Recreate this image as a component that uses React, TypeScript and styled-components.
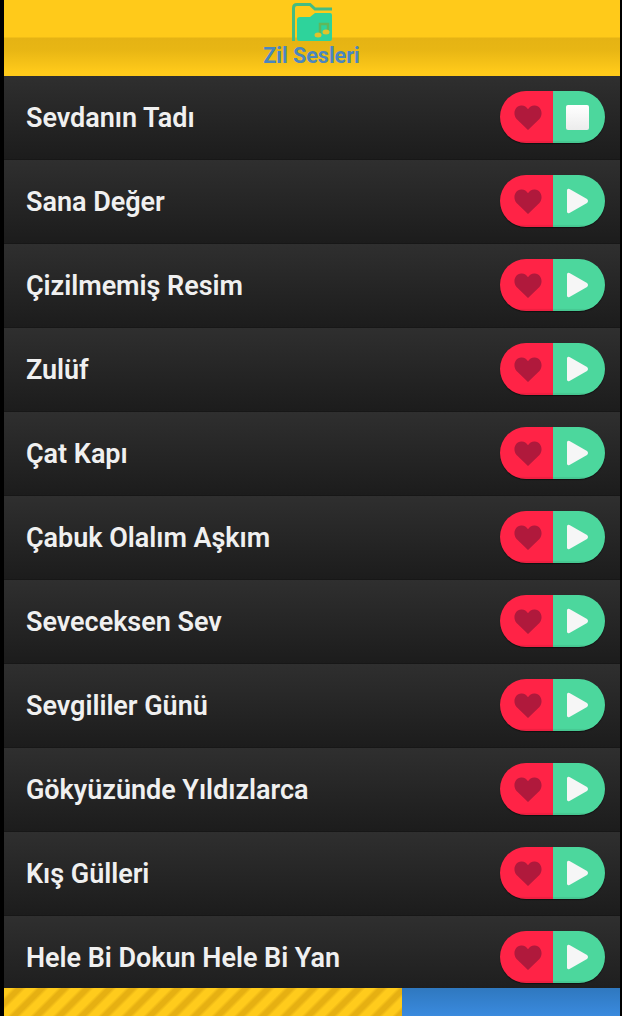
import React from 'react';
import styled, { createGlobalStyle } from 'styled-components';

const songs = [
  'Sevdanın Tadı',
  'Sana Değer',
  'Çizilmemiş Resim',
  'Zulüf',
  'Çat Kapı',
  'Çabuk Olalım Aşkım',
  'Seveceksen Sev',
  'Sevgililer Günü',
  'Gökyüzünde Yıldızlarca',
  'Kış Gülleri',
  'Hele Bi Dokun Hele Bi Yan',
];

const GlobalStyle = createGlobalStyle`
  html, body {
    margin: 0;
    padding: 0;
    background: #000;
    overflow: hidden;
  }
`;

const Screen = styled.div`
  width: 622px;
  height: 1016px;
  padding: 0 2px 0 4px;
  box-sizing: border-box;
  display: flex;
  flex-direction: column;
  overflow: hidden;
  font-family: Roboto, 'Liberation Sans', sans-serif;
`;

const Header = styled.header`
  height: 76px;
  flex: none;
  display: flex;
  flex-direction: column;
  align-items: center;
  background: linear-gradient(
    #ffca1a 0,
    #ffca1a 37px,
    #e5b314 38px,
    #e8b614 50px,
    #ffca1a 72px
  );
`;

const FolderIcon = styled.svg`
  width: 42px;
  height: 40px;
  margin-top: 2px;
  flex: none;
`;

const Title = styled.h1`
  margin: 1px 1px 0 0;
  font-size: 21.5px;
  line-height: 25px;
  font-weight: 700;
  color: #4a86c0;
`;

const List = styled.main`
  flex: 1;
  min-height: 0;
  overflow: hidden;
`;

const Row = styled.div`
  height: 84px;
  box-sizing: border-box;
  display: flex;
  align-items: center;
  justify-content: space-between;
  padding: 0 15px 0 22px;
  background: linear-gradient(#2f2f2f, #1c1c1c);
  border-bottom: 1px solid #171717;
`;

const SongName = styled.span`
  margin-top: 1px;
  font-size: 27px;
  font-weight: 600;
  letter-spacing: -0.03px;
  color: #f0f0f0;
`;

const Toggle = styled.div`
  width: 105px;
  height: 52px;
  display: flex;
  margin-top: -1px;
  border-radius: 26px;
  overflow: hidden;
  box-shadow: 0 1px 1px rgba(0, 0, 0, 0.5);
`;

const Half = styled.button<{ $color: string; $width: number }>`
  width: ${(p) => p.$width}px;
  padding: 0;
  border: 0;
  display: flex;
  align-items: center;
  justify-content: center;
  background: ${(p) => p.$color};
  box-shadow: inset 0 -2px 1px rgba(0, 0, 0, 0.07);
`;

const LikeHalf = styled(Half)`
  padding-left: 3px;
`;

const PlayHalf = styled(Half)`
  padding-right: 3px;
`;

const StopSquare = styled.span`
  width: 23px;
  height: 25px;
  border-radius: 2px;
  background: linear-gradient(#fff, #ececec);
`;

const BottomBar = styled.footer`
  height: 28px;
  flex: none;
  display: flex;
`;

const Progress = styled.div`
  width: 398px;
  background: repeating-linear-gradient(
    135deg,
    #ffcb1c 0,
    #ffcb1c 6px,
    #e6b012 9px,
    #e6b012 13px,
    #ffcb1c 16px
  );
`;

const Rest = styled.div`
  flex: 1;
  background: linear-gradient(#2f78bf, #3a8ade);
`;

const Heart = () => (
  <svg width="28" height="25" viewBox="0 0 27 24">
    <path
      d="M13.500 24 L2.500 13.500 C-1.500 9 0.500 1 7 0.500 C9.800 0.300 12 1.800 13.500 4 C15 1.800 17.200 0.300 20 0.500 C26.500 1 28.500 9 24.500 13.500 Z"
      fill="#b0193c"
    />
  </svg>
);

const PlayArrow = () => (
  <svg width="23" height="26" viewBox="0 0 23 26">
    <path
      d="M3.500 1 L21 11 Q23 13 21 15 L3.500 25 Q1 26 1 23.500 L1 2.500 Q1 0 3.500 1 Z"
      fill="#f6f6f6"
    />
  </svg>
);

export default function App() {
  return (
    <Screen>
      <GlobalStyle />
      <Header>
        <FolderIcon viewBox="0 0 42 40">
          <path
            d="M2.500 39 L2.500 6 Q2.500 2.500 6 2.500 L19 2.500 L24 7 L41 7"
            fill="none"
            stroke="#45bc82"
            strokeWidth="3"
          />
          <path
            d="M8 39 Q6 39 6 37 L6 18 Q6 15 9 15 L19 15 L24 11 L39 11 Q41 11 41 13 L41 37 Q41 39 39 39 Z"
            fill="#2ed39b"
          />
          <path d="M29 32 L29 22 L37 22 L37 29" fill="none" stroke="#5fb85a" strokeWidth="2.500" />
          <ellipse cx="27" cy="33" rx="3.500" ry="2.500" fill="#e3c22a" />
          <ellipse cx="35" cy="30" rx="3.500" ry="2.500" fill="#e3c22a" />
        </FolderIcon>
        <Title>Zil Sesleri</Title>
      </Header>
      <List>
        {songs.map((name, i) => (
          <Row key={name}>
            <SongName>{name}</SongName>
            <Toggle>
              <LikeHalf $color="#ff2346" $width={53}>
                <Heart />
              </LikeHalf>
              <PlayHalf $color="#4cd79d" $width={52}>
                {i === 0 ? <StopSquare /> : <PlayArrow />}
              </PlayHalf>
            </Toggle>
          </Row>
        ))}
      </List>
      <BottomBar>
        <Progress />
        <Rest />
      </BottomBar>
    </Screen>
  );
}
